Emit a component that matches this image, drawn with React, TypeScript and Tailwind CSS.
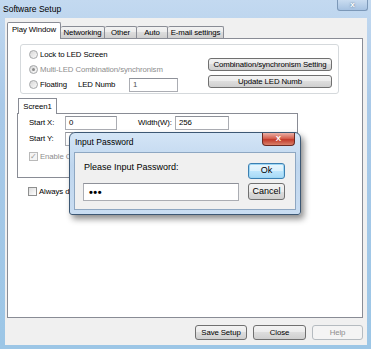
import React from "react";

function Radio({ checked }: { checked?: boolean }) {
  return (
    <span className="flex h-[9px] w-[9px] shrink-0 items-center justify-center rounded-full border border-[#a4a6a8] bg-[linear-gradient(135deg,#d6d6d6,#fbfbfb)]">
      {checked && <span className="h-[3px] w-[3px] rounded-full bg-[#8c8c8c]" />}
    </span>
  );
}

function Check({ checked, disabled }: { checked?: boolean; disabled?: boolean }) {
  return (
    <span
      className={`flex h-[9px] w-[9px] shrink-0 items-center justify-center border ${
        disabled ? "border-[#b9b9b9] bg-[#f4f4f4]" : "border-[#8e8f8f] bg-[linear-gradient(135deg,#dcdcdc,#ffffff)]"
      }`}
    >
      {checked && <span className="text-[8px] leading-none text-[#9a9a9a]">✓</span>}
    </span>
  );
}

function WinButton({ label, className, disabled }: { label: string; className: string; disabled?: boolean }) {
  return (
    <div
      className={`flex items-center justify-center rounded-[3px] border ${
        disabled
          ? "border-[#b5bbc0] bg-[#f4f4f4] text-[#8d8d8d]"
          : "border-[#707070] bg-[linear-gradient(#f3f3f3,#ebebeb_50%,#dddddd_50%,#cfcfcf)] text-black"
      } ${className}`}
    >
      {label}
    </div>
  );
}

function Field({ value, className }: { value?: string; className: string }) {
  return (
    <div className={`flex items-center border border-[#abadb3] border-t-[#8e9199] bg-white pl-[3px] ${className}`}>
      {value}
    </div>
  );
}

const tabs = [
  { label: "Networking", w: "w-[44px]" },
  { label: "Other", w: "w-[32px]" },
  { label: "Auto", w: "w-[31px]" },
  { label: "E-mail settings", w: "w-[56px]" },
];

export default function App() {
  return (
    <div className="relative flex h-[349px] w-[371px] flex-col overflow-hidden bg-[linear-gradient(180deg,#c3d9f0,#a9c9e8_30%,#9cc6e6)] font-['Liberation_Sans',Arial,sans-serif] text-[7.8px] tracking-[-0.1px] text-black">
      {/* title bar */}
      <div className="flex h-[18px] items-start justify-between">
        <span className="pl-[3px] pt-[4px] text-[8.5px] leading-[10px] tracking-normal">Software Setup</span>
        <div className="mr-[3px] flex h-[11px] w-[31px] items-center justify-center rounded-b-[3px] border border-t-0 border-[#7c98b8] bg-[linear-gradient(#c9dcf0,#a6c2e1)] text-[8px] font-bold leading-none text-white [text-shadow:0_0_2px_#41607f]">
          x
        </div>
      </div>

      {/* body */}
      <div className="ml-[5px] flex h-[327px] w-[362px] flex-col bg-[#f0f0f0] pl-[2px] pt-[5px]">
        {/* tab strip */}
        <div className="flex h-[15px] items-end">
          <div className="relative z-10 -mb-px flex h-[17px] w-[54px] items-center justify-center rounded-t-[2px] border border-b-0 border-[#898c95] bg-white pb-[2px]">
            Play Window
          </div>
          {tabs.map((t) => (
            <div
              key={t.label}
              className={`flex h-[12px] ${t.w} items-center justify-center rounded-t-[2px] border border-b-0 border-l-0 border-[#898c95] bg-[linear-gradient(#f2f2f2,#ebebeb_50%,#dddddd_50%,#cfcfcf)]`}
            >
              {t.label}
            </div>
          ))}
        </div>

        {/* tab page */}
        <div className="h-[280px] w-[356px] border border-[#898c95] bg-white">
          {/* group box */}
          <div className="ml-[12px] mt-[5px] flex h-[50px] w-[319px] rounded-[3px] border border-[#d5d9dc]">
            <div className="flex flex-col pl-[8px] pt-[2px]">
              <div className="flex h-[15px] items-center gap-[2px]">
                <Radio />
                <span>Lock to LED Screen</span>
              </div>
              <div className="flex h-[15px] items-center gap-[2px] text-[#8d8d8d]">
                <Radio checked />
                <span>Multi-LED Combination/synchronism</span>
              </div>
              <div className="flex h-[15px] items-center">
                <Radio />
                <span className="ml-[2px] w-[38px]">Floating</span>
                <span className="w-[51px]">LED Numb</span>
                <Field value="1" className="h-[14px] w-[49px] text-[#555]" />
              </div>
            </div>
            <div className="ml-auto flex flex-col gap-[4px] pr-[6px] pt-[13px]">
              <WinButton label="Combination/synchronism Setting" className="h-[13px] w-[124px]" />
              <WinButton label="Update LED Numb" className="h-[13px] w-[124px]" />
            </div>
          </div>

          {/* Screen1 tab control */}
          <div className="ml-[9px] mt-[4px] w-[281px]">
            <div className="flex h-[15px] items-end pl-px">
              <div className="relative z-10 -mb-px flex h-[16px] w-[39px] items-center justify-center border border-b-0 border-[#898c95] bg-white">
                Screen1
              </div>
            </div>
            <div className="h-[65px] border border-[#898c95] bg-white pl-[11px] pt-[2px]">
              <div className="flex items-center">
                <span className="w-[36px]">Start X:</span>
                <Field value="0" className="h-[14px] w-[52px]" />
                <span className="ml-[21px] w-[37px]">Width(W):</span>
                <Field value="256" className="h-[14px] w-[54px]" />
              </div>
              <div className="mt-[2px] flex items-center">
                <span className="w-[36px]">Start Y:</span>
                <Field className="h-[14px] w-[8px]" />
              </div>
              <div className="mt-[6px] flex h-[9px] items-center gap-[2px] text-[#8d8d8d]">
                <Check checked disabled />
                <span className="whitespace-nowrap">Enable C</span>
              </div>
            </div>
          </div>

          <div className="ml-[20px] mt-[9px] flex h-[9px] items-center gap-[2px]">
            <Check />
            <span className="whitespace-nowrap">Always d</span>
          </div>
        </div>

        {/* bottom buttons */}
        <div className="flex justify-end gap-[6px] pr-[4px] pt-[7px]">
          <WinButton label="Save Setup" className="h-[15px] w-[52px]" />
          <WinButton label="Close" className="h-[15px] w-[53px]" />
          <WinButton label="Help" className="h-[15px] w-[51px]" disabled />
        </div>
      </div>

      {/* Input Password dialog */}
      <div className="absolute left-[69px] top-[132px] flex h-[83px] w-[232px] flex-col rounded-t-[6px] rounded-b-[3px] border border-[#3d5874] bg-[linear-gradient(180deg,#d4e5f6,#bfd6ee_40%,#c9ddf2)] font-['Liberation_Sans',Arial,sans-serif] text-[9px] tracking-normal shadow-[3px_4px_6px_rgba(0,0,0,0.45)]">
        <div className="flex h-[19px] items-start justify-between">
          <span className="pl-[5px] pt-[4px] text-[8.5px] leading-[10px]">Input Password</span>
          <div className="mr-[5px] flex h-[13px] w-[33px] items-center justify-center rounded-b-[4px] border border-t-0 border-[#6b2a22] bg-[linear-gradient(#eab0a6,#d5604f_45%,#c23b2b_55%,#d9806a)] text-[8px] font-bold leading-none text-white">
            X
          </div>
        </div>
        <div className="ml-[4px] flex h-[58px] w-[222px] border border-[#8ea7c2] bg-[#f0f0f0]">
          <div className="flex flex-col pl-[8px] pt-[9px]">
            <span className="ml-px h-[11px] leading-[11px]">Please Input Password:</span>
            <div className="mt-[10px] flex h-[18px] w-[156px] items-center border border-[#abadb3] border-t-[#8e9199] bg-white pl-[5px] text-[11px] font-bold leading-none tracking-[0.5px]">
              •••
            </div>
          </div>
          <div className="ml-auto flex flex-col gap-[4px] pr-[10px] pt-[10px]">
            <div className="flex h-[16px] w-[37px] items-center justify-center rounded-[3px] border border-[#3c7fb1] bg-[linear-gradient(#eaf6fd,#d9f0fc_50%,#bee6fd_50%,#a7d9f5)] shadow-[inset_0_0_0_1px_#9ed7f5]">
              Ok
            </div>
            <div className="flex h-[17px] w-[37px] items-center justify-center rounded-[3px] border border-[#707070] bg-[linear-gradient(#f3f3f3,#ebebeb_50%,#dddddd_50%,#cfcfcf)]">
              Cancel
            </div>
          </div>
        </div>
      </div>
    </div>
  );
}
